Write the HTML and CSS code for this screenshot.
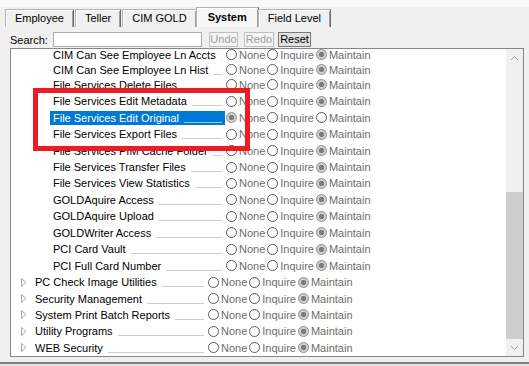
FILE: index.html
```html
<!DOCTYPE html>
<html lang="en">

<head>
    <meta charset="UTF-8">
    <title>Security Rights</title>
    <link rel="stylesheet" href="styles.css">
</head>

<body>

    <div class="tabstrip">
        <div class="tab">Employee</div>
        <div class="tab">Teller</div>
        <div class="tab">CIM GOLD</div>
        <div class="tab active">System</div>
        <div class="tab">Field Level</div>
    </div>

    <div class="page">
        <div class="search">
            <label class="search-label">Search:</label>
            <input class="search-box" type="text">
            <button class="btn btn-undo" disabled>Undo</button>
            <button class="btn btn-redo" disabled>Redo</button>
            <button class="btn btn-reset">Reset</button>
        </div>

        <div class="tree">
            <div class="list">
                <div class="rows">
                    <div class="row child first">
                        <div class="cell"><span class="name">CIM Can See Employee Ln Accts</span><span class="field"></span></div>
                        <div class="opts"><span class="opt"><i class="radio"></i>None</span><span class="opt"><i class="radio"></i>Inquire</span><span class="opt"><i class="radio on"></i>Maintain</span></div>
                    </div>
                    <div class="row child second">
                        <div class="cell"><span class="name">CIM Can See Employee Ln Hist</span><span class="field"></span></div>
                        <div class="opts"><span class="opt"><i class="radio"></i>None</span><span class="opt"><i class="radio"></i>Inquire</span><span class="opt"><i class="radio on"></i>Maintain</span></div>
                    </div>
                    <div class="row child">
                        <div class="cell"><span class="name">File Services Delete Files</span><span class="field"></span></div>
                        <div class="opts"><span class="opt"><i class="radio"></i>None</span><span class="opt"><i class="radio"></i>Inquire</span><span class="opt"><i class="radio on"></i>Maintain</span></div>
                    </div>
                    <div class="row child">
                        <div class="cell"><span class="name">File Services Edit Metadata</span><span class="field"></span></div>
                        <div class="opts"><span class="opt"><i class="radio"></i>None</span><span class="opt"><i class="radio"></i>Inquire</span><span class="opt"><i class="radio on"></i>Maintain</span></div>
                    </div>
                    <div class="row child">
                        <div class="cell selected"><span class="name">File Services Edit Original</span><span class="field"></span></div>
                        <div class="opts"><span class="opt"><i class="radio on"></i>None</span><span class="opt"><i class="radio"></i>Inquire</span><span class="opt"><i class="radio"></i>Maintain</span></div>
                    </div>
                    <div class="row child">
                        <div class="cell"><span class="name">File Services Export Files</span><span class="field"></span></div>
                        <div class="opts"><span class="opt"><i class="radio"></i>None</span><span class="opt"><i class="radio"></i>Inquire</span><span class="opt"><i class="radio on"></i>Maintain</span></div>
                    </div>
                    <div class="row child">
                        <div class="cell"><span class="name">File Services PIM Cache Folder</span><span class="field"></span></div>
                        <div class="opts"><span class="opt"><i class="radio"></i>None</span><span class="opt"><i class="radio"></i>Inquire</span><span class="opt"><i class="radio on"></i>Maintain</span></div>
                    </div>
                    <div class="row child">
                        <div class="cell"><span class="name">File Services Transfer Files</span><span class="field"></span></div>
                        <div class="opts"><span class="opt"><i class="radio"></i>None</span><span class="opt"><i class="radio"></i>Inquire</span><span class="opt"><i class="radio on"></i>Maintain</span></div>
                    </div>
                    <div class="row child">
                        <div class="cell"><span class="name">File Services View Statistics</span><span class="field"></span></div>
                        <div class="opts"><span class="opt"><i class="radio"></i>None</span><span class="opt"><i class="radio"></i>Inquire</span><span class="opt"><i class="radio on"></i>Maintain</span></div>
                    </div>
                    <div class="row child">
                        <div class="cell"><span class="name">GOLDAquire Access</span><span class="field"></span></div>
                        <div class="opts"><span class="opt"><i class="radio"></i>None</span><span class="opt"><i class="radio"></i>Inquire</span><span class="opt"><i class="radio on"></i>Maintain</span></div>
                    </div>
                    <div class="row child">
                        <div class="cell"><span class="name">GOLDAquire Upload</span><span class="field"></span></div>
                        <div class="opts"><span class="opt"><i class="radio"></i>None</span><span class="opt"><i class="radio"></i>Inquire</span><span class="opt"><i class="radio on"></i>Maintain</span></div>
                    </div>
                    <div class="row child">
                        <div class="cell"><span class="name">GOLDWriter Access</span><span class="field"></span></div>
                        <div class="opts"><span class="opt"><i class="radio"></i>None</span><span class="opt"><i class="radio"></i>Inquire</span><span class="opt"><i class="radio on"></i>Maintain</span></div>
                    </div>
                    <div class="row child">
                        <div class="cell"><span class="name">PCI Card Vault</span><span class="field"></span></div>
                        <div class="opts"><span class="opt"><i class="radio"></i>None</span><span class="opt"><i class="radio"></i>Inquire</span><span class="opt"><i class="radio on"></i>Maintain</span></div>
                    </div>
                    <div class="row child">
                        <div class="cell"><span class="name">PCI Full Card Number</span><span class="field"></span></div>
                        <div class="opts"><span class="opt"><i class="radio"></i>None</span><span class="opt"><i class="radio"></i>Inquire</span><span class="opt"><i class="radio on"></i>Maintain</span></div>
                    </div>

                    <div class="row parent">
                        <span class="expander"><svg width="6" height="9" viewBox="0 0 6 9"><polygon points="0.5,0.5 5,4.5 0.5,8.5" fill="none" stroke="#a6a6a6"/></svg></span>
                        <div class="cell"><span class="name">PC Check Image Utilities</span><span class="field"></span></div>
                        <div class="opts"><span class="opt"><i class="radio"></i>None</span><span class="opt"><i class="radio"></i>Inquire</span><span class="opt"><i class="radio on"></i>Maintain</span></div>
                    </div>
                    <div class="row parent">
                        <span class="expander"><svg width="6" height="9" viewBox="0 0 6 9"><polygon points="0.5,0.5 5,4.5 0.5,8.5" fill="none" stroke="#a6a6a6"/></svg></span>
                        <div class="cell"><span class="name">Security Management</span><span class="field"></span></div>
                        <div class="opts"><span class="opt"><i class="radio"></i>None</span><span class="opt"><i class="radio"></i>Inquire</span><span class="opt"><i class="radio on"></i>Maintain</span></div>
                    </div>
                    <div class="row parent">
                        <span class="expander"><svg width="6" height="9" viewBox="0 0 6 9"><polygon points="0.5,0.5 5,4.5 0.5,8.5" fill="none" stroke="#a6a6a6"/></svg></span>
                        <div class="cell"><span class="name">System Print Batch Reports</span><span class="field"></span></div>
                        <div class="opts"><span class="opt"><i class="radio"></i>None</span><span class="opt"><i class="radio"></i>Inquire</span><span class="opt"><i class="radio on"></i>Maintain</span></div>
                    </div>
                    <div class="row parent">
                        <span class="expander"><svg width="6" height="9" viewBox="0 0 6 9"><polygon points="0.5,0.5 5,4.5 0.5,8.5" fill="none" stroke="#a6a6a6"/></svg></span>
                        <div class="cell"><span class="name">Utility Programs</span><span class="field"></span></div>
                        <div class="opts"><span class="opt"><i class="radio"></i>None</span><span class="opt"><i class="radio"></i>Inquire</span><span class="opt"><i class="radio on"></i>Maintain</span></div>
                    </div>
                    <div class="row parent">
                        <span class="expander"><svg width="6" height="9" viewBox="0 0 6 9"><polygon points="0.5,0.5 5,4.5 0.5,8.5" fill="none" stroke="#a6a6a6"/></svg></span>
                        <div class="cell"><span class="name">WEB Security</span><span class="field"></span></div>
                        <div class="opts"><span class="opt"><i class="radio"></i>None</span><span class="opt"><i class="radio"></i>Inquire</span><span class="opt"><i class="radio on"></i>Maintain</span></div>
                    </div>
                </div>
            </div>

            <div class="scroll">
                <div class="sb-btn"><svg width="9" height="6" viewBox="0 0 9 6"><polyline points="1,5 4.5,1.5 8,5" fill="none" stroke="#a3a3a3"/></svg></div>
                <div class="track"><div class="thumb"></div></div>
                <div class="sb-btn"><svg width="9" height="6" viewBox="0 0 9 6"><polyline points="1,1 4.5,4.5 8,1" fill="none" stroke="#a3a3a3"/></svg></div>
            </div>
        </div>
    </div>

    <div class="statusline"></div>

    <!-- highlight drawn over the list -->
    <div class="callout"></div>

</body>

</html>
```

FILE: styles.css
```css
body {
    font-family: "Liberation Sans", Arial, sans-serif;
    font-size: 11px;
    background-color: #f0f0f0;
    margin: 0;
    padding: 0;
    width: 529px;
    height: 366px;
    overflow: hidden;
    position: relative;
}

/* tabs */

.tabstrip {
    display: flex;
    align-items: flex-end;
    height: 20px;
    padding: 7px 0 0 5px;
    background: linear-gradient(#f9f9f9 0, #f9f9f9 7px, #f0f0f0 7px);
}

.tab {
    height: 18px;
    line-height: 17px;
    padding: 0 9px;
    margin-right: 1px;
    border: 1px solid #b4b4b4;
    border-right-color: #696969;
    border-bottom: none;
    box-sizing: border-box;
    background-color: #f0f0f0;
    box-shadow: inset 1px 1px #fff, inset -1px 0 #a0a0a0;
    color: #000;
}

.tab.active {
    height: 20px;
    line-height: 18px;
    padding: 0 11px;
    margin: 0 -1px 0 -2px;
    font-weight: bold;
    background-color: #f7f7f7;
}

/* search row */

.page {
    padding: 5px 0 0 10px;
}

.search {
    display: flex;
    align-items: center;
    height: 15px;
}

.search-label {
    width: 43px;
}

.search-box {
    width: 149px;
    height: 15px;
    margin: 0;
    padding: 0;
    border: 1px solid #abadb3;
    box-sizing: border-box;
    background-color: #fff;
}

.btn {
    height: 15px;
    margin: 0;
    padding: 0;
    font-family: inherit;
    font-size: 11px;
    line-height: 13px;
    box-sizing: border-box;
    border: 1px solid #bfbfbf;
    background-color: #f4f4f4;
    color: #a0a0a0;
}

.btn-undo {
    width: 29px;
    margin-left: 7px;
}

.btn-redo {
    width: 30px;
    margin-left: 6px;
}

.btn-reset {
    width: 33px;
    margin-left: 4px;
    border-color: #7a7a7a;
    background-color: #e1e1e1;
    color: #000;
}

/* tree */

.tree {
    display: flex;
    width: 514px;
    height: 309px;
    margin-top: 1px;
    border: 1px solid #828790;
    box-sizing: border-box;
    background-color: #fff;
}

.list {
    flex: 1;
    overflow: hidden;
}

.rows {
    margin-top: -3px;
}

.row {
    display: flex;
    align-items: center;
    height: 16.45px;
    white-space: nowrap;
    color: #000;
}

.row.first {
    height: 17.3px;
}

.row.second {
    height: 13.3px;
}

.row.child {
    padding-left: 39px;
}

.expander {
    display: flex;
    align-items: center;
    width: 21px;
    padding-left: 10px;
    box-sizing: border-box;
}

.cell {
    display: flex;
    align-items: center;
    flex-shrink: 0;
    width: 175px;
    height: 14px;
    padding-left: 3px;
    box-sizing: border-box;
}

.cell.selected {
    background-color: #0078d7;
    color: #fff;
}

.field {
    flex: 1;
    height: 9px;
    margin: 0 3px 0 5px;
    border-bottom: 1px solid #cdcdcd;
}

.cell.selected .field {
    border-bottom-color: #9fc6ea;
}

.opts {
    display: flex;
    align-items: center;
    margin-left: 1px;
    color: #6d6d6d;
}

.opt {
    display: flex;
    align-items: center;
    margin-right: 2px;
}

.radio {
    width: 11px;
    height: 11px;
    margin-right: 2px;
    border: 1px solid #5a5a5a;
    border-radius: 50%;
    box-sizing: border-box;
    background-color: #fff;
}

.radio.on {
    border-color: #8c8c8c;
    background: radial-gradient(circle, #7d7d7d 0, #7d7d7d 2.4px, #cfcfcf 3px);
}

/* scrollbar */

.scroll {
    display: flex;
    flex-direction: column;
    width: 17px;
    background-color: #f0f0f0;
}

.sb-btn {
    display: flex;
    align-items: center;
    justify-content: center;
    height: 17px;
}

.track {
    flex: 1;
    display: flex;
    flex-direction: column;
    justify-content: flex-end;
}

.thumb {
    height: 147px;
    background-color: #cdcdcd;
}

.statusline {
    margin-top: 5px;
    height: 10px;
    border-top: 2px solid #808080;
    background-color: #e6e6e6;
}

.callout {
    position: absolute;
    left: 33px;
    top: 88px;
    width: 217px;
    height: 63px;
    border: 5px solid #ed1c24;
    box-sizing: border-box;
}
```
